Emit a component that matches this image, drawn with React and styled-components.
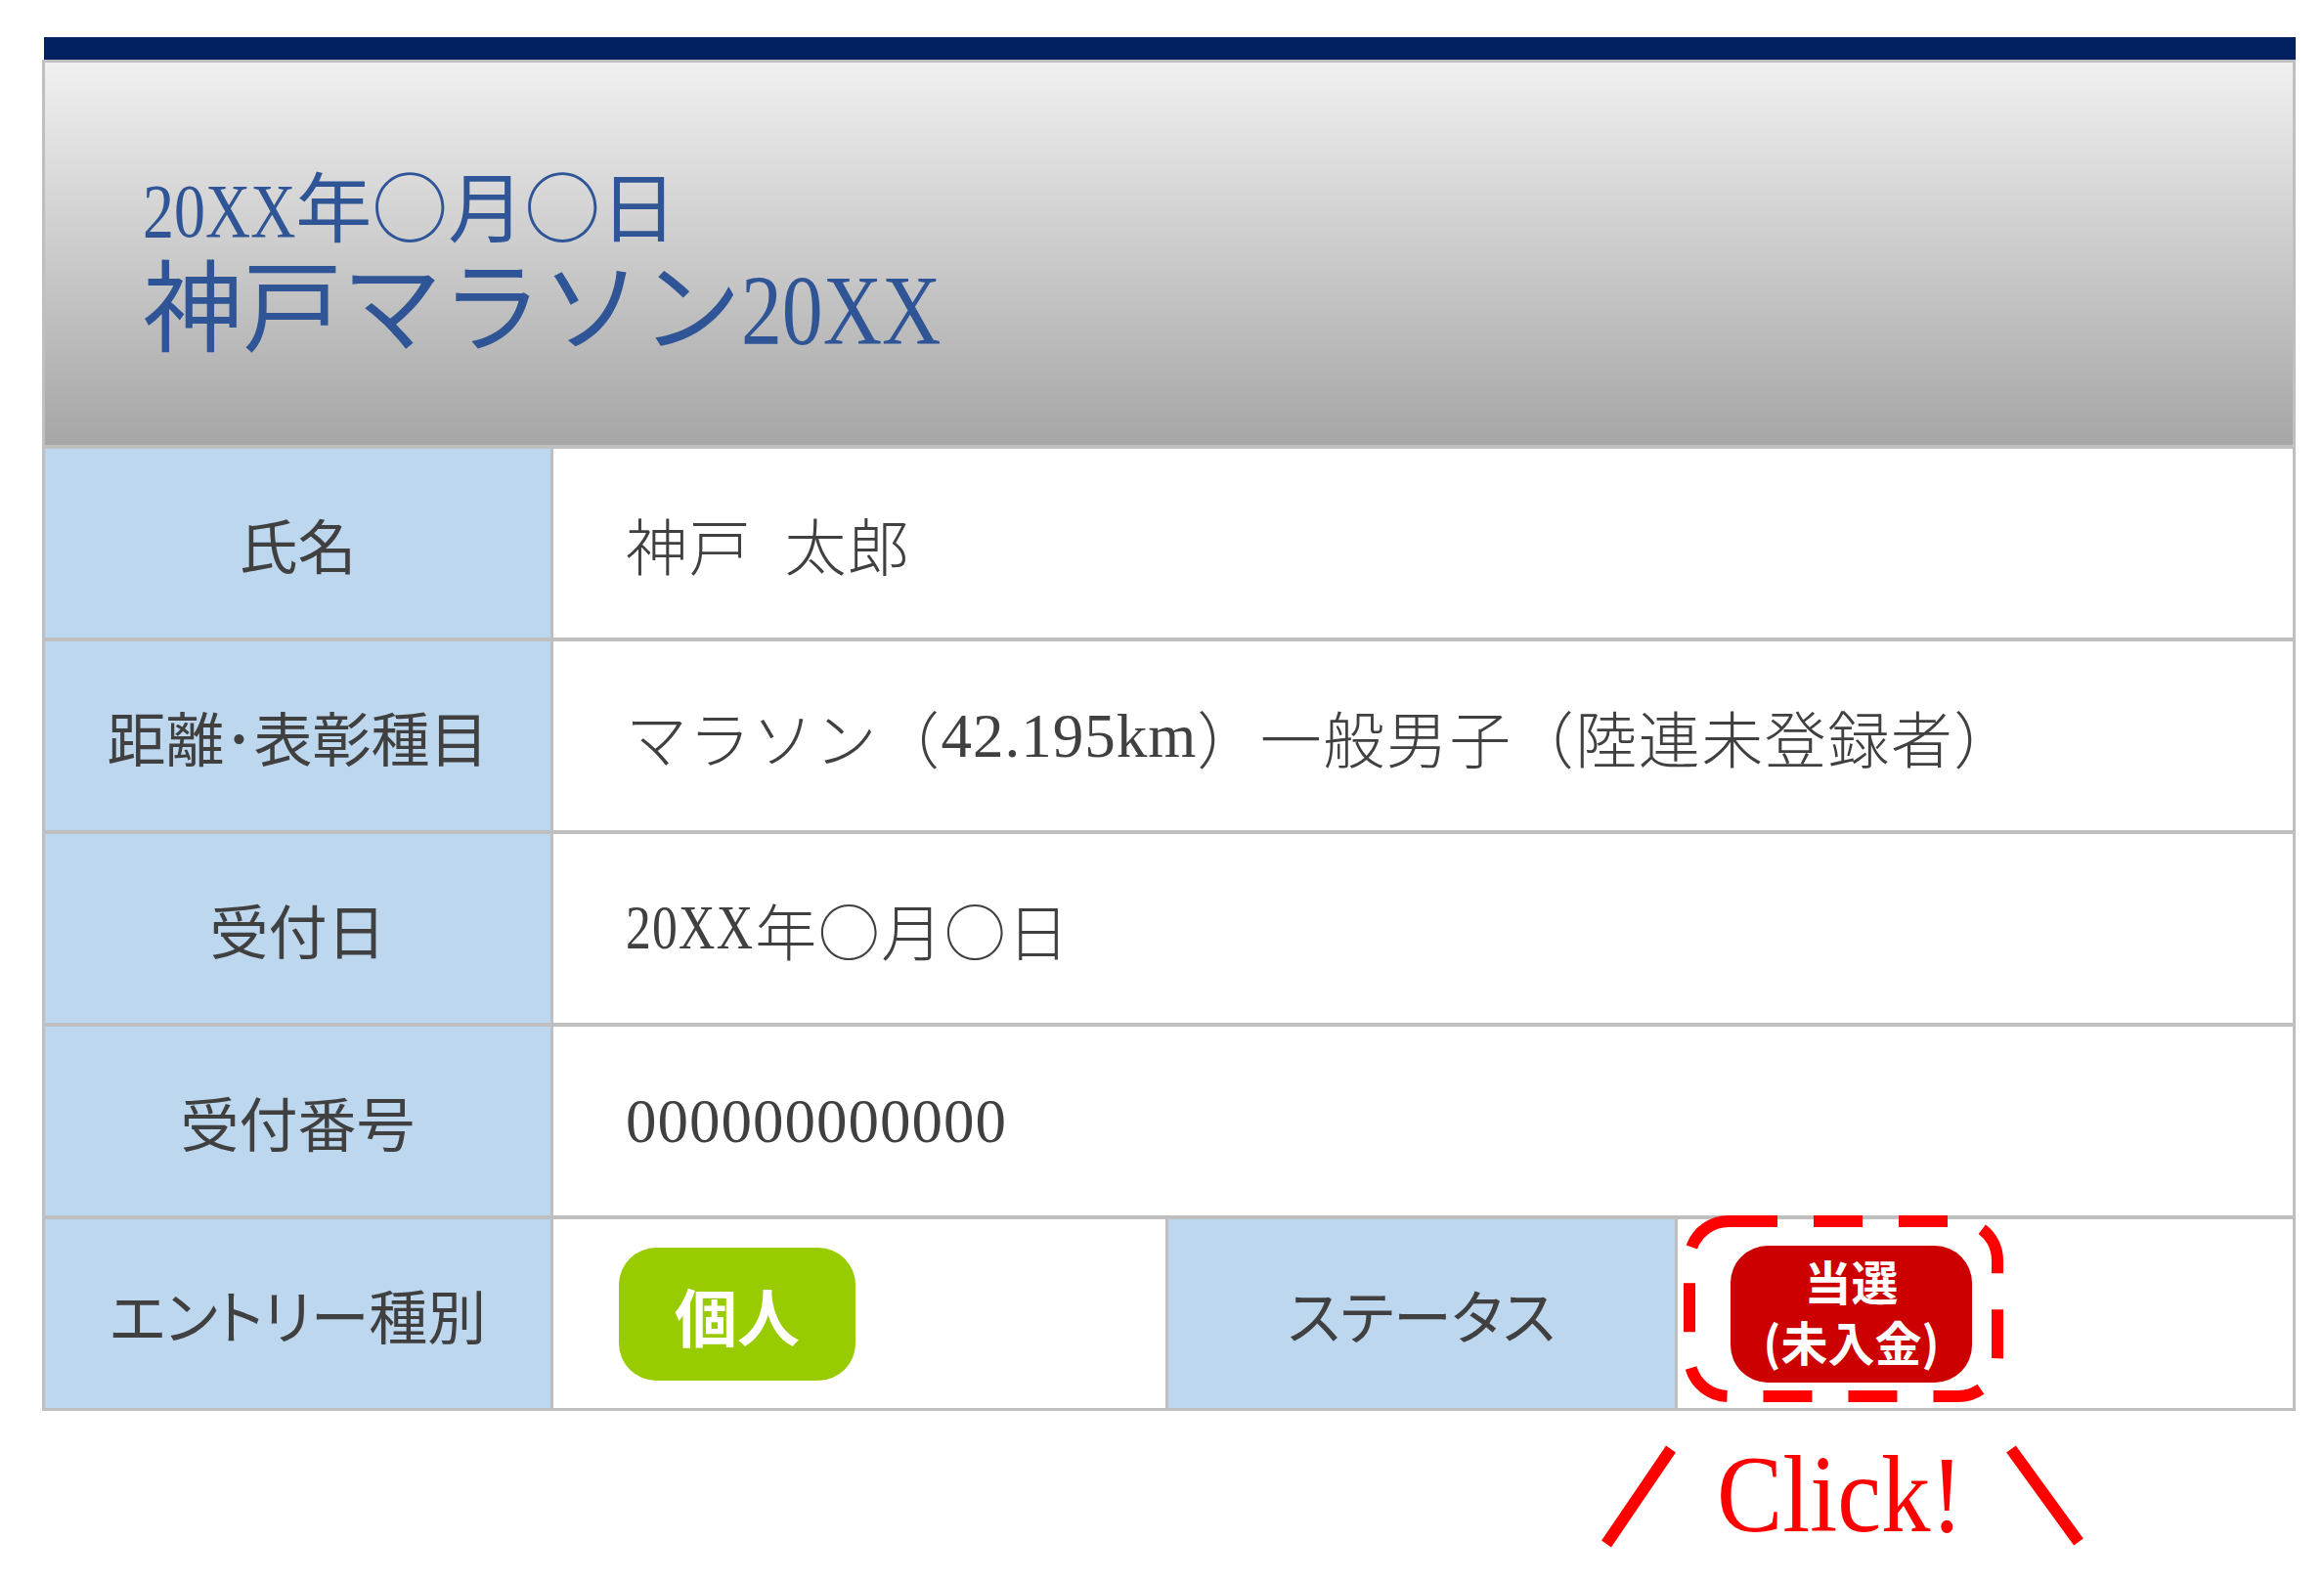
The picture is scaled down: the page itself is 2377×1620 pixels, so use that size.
import React from 'react';
import styled, { createGlobalStyle } from 'styled-components';

/* ── page ── */
const GlobalStyle = createGlobalStyle`
  html, body { margin: 0; padding: 0; background: #fff; }
  body { font-family: "Noto Sans CJK JP", "Noto Sans", sans-serif; }
`;

const Page = styled.div`
  width: 2305px;
  padding: 38px 0 40px 43px;
`;

const NavyBar = styled.div`
  height: 23px;
  margin-left: 2px;
  background: #002060;
`;

/* grey background shows through the gaps as the table rules */
const Sheet = styled.div`
  display: flex;
  flex-direction: column;
  gap: 4px;
  padding: 3px;
  background: #bfbfbf;
`;

/* ── header ── */
const Header = styled.header`
  box-sizing: border-box;
  height: 391px;
  padding: 0 0 0 100px;
  display: flex;
  flex-direction: column;
  justify-content: center;
  background: linear-gradient(180deg, #f0f0f0 0%, #a6a6a6 100%);
  color: #2f5597;
`;

const EventDate = styled.div`
  font-size: 78px;
  line-height: 96px;
`;

const EventName = styled.div`
  font-size: 102px;
  line-height: 103px;
`;

/* half-width latin runs */
const Num = styled.span`
  font-family: "Liberation Serif", serif;
  letter-spacing: 1px;
  line-height: 0;
`;

/* "20XX" squeezed to half-width cells like the original mincho face */
const Year = styled.span`
  display: inline-block;
  font-family: "Liberation Serif", serif;
  line-height: 0.8;
  transform: scaleX(0.82);
  transform-origin: 0 0;
  margin-right: -0.44em;
`;

/* ── rows ── */
const Row = styled.div`
  display: grid;
  grid-template-columns: ${({ $cols }) => $cols};
  column-gap: 3px;
  height: 193px;
`;

const Label = styled.div`
  display: flex;
  align-items: center;
  justify-content: center;
  background: #bdd7ee;
  color: #404040;
  font-size: 60px;
  font-feature-settings: "palt";
`;

const Value = styled.div`
  position: relative;
  display: flex;
  align-items: center;
  padding-left: ${({ $pad }) => $pad ?? 74}px;
  background: #fff;
  color: #404040;
  font-size: 63px;
  font-weight: 300;
  letter-spacing: 1.5px;
  word-spacing: 18px;
  white-space: nowrap;
`;

const Badge = styled.div`
  flex: none;
  box-sizing: border-box;
  display: flex;
  flex-direction: column;
  align-items: center;
  justify-content: center;
  width: ${({ $w }) => $w}px;
  height: ${({ $h }) => $h}px;
  padding-bottom: ${({ $lift }) => $lift ?? 0}px;
  border-radius: 38px;
  background: ${({ $bg }) => $bg};
  color: #fff;
  font-weight: 700;
  font-size: ${({ $size }) => $size}px;
  line-height: ${({ $lh }) => $lh}px;
  letter-spacing: 0;
  word-spacing: 0;
`;

/* ── click annotation ── */
const ClickFrame = styled.svg`
  position: absolute;
  left: 6px;
  top: -4px;
  width: 327px;
  height: 191px;
  overflow: visible;
  pointer-events: none;
`;

const Hint = styled.div`
  display: flex;
  align-items: flex-start;
  margin: 32px 0 0 1587px;
`;

const Slash = styled.svg`
  flex: none;
`;

const ClickText = styled.div`
  width: 250px;
  margin: 0 34px;
  font-family: "Liberation Serif", serif;
  font-size: 112px;
  line-height: 106px;
  color: #ff0000;
  white-space: nowrap;
`;

const ClickWord = styled.span`
  display: inline-block;
  transform: scaleX(0.9);
  transform-origin: left center;
`;

const rows = [
  { label: '氏名', value: <>神戸 太郎</> },
  { label: '距離･表彰種目', value: <>マラソン（<Num>42.195km</Num>）一般男子（陸連未登録者）</> },
  { label: '受付日', value: <><Year>20XX</Year>年○月○日</> },
  { label: '受付番号', value: <Num>000000000000</Num> },
];

export default function App() {
  return (
    <Page>
      <GlobalStyle />
      <NavyBar />
      <Sheet>
        <Header>
          <EventDate><Year>20XX</Year>年○月○日</EventDate>
          <EventName>神戸マラソン<Year>20XX</Year></EventName>
        </Header>

        {rows.map((r) => (
          <Row key={r.label} $cols="517px 1fr">
            <Label>{r.label}</Label>
            <Value>{r.value}</Value>
          </Row>
        ))}

        <Row $cols="517px 626px 518px 1fr">
          <Label>エントリー種別</Label>
          <Value $pad={67}>
            <Badge $w={242} $h={136} $bg="#99cc00" $size={64} $lh={80}>個人</Badge>
          </Value>
          <Label>ステータス</Label>
          <Value $pad={54}>
            <Badge $w={247} $h={140} $bg="#cc0000" $size={48} $lh={62} $lift={8}>
              <span>当選</span>
              <span>(未入金)</span>
            </Badge>
            <ClickFrame viewBox="0 0 327 191">
              <rect x="6" y="6" width="315" height="179" rx="40" ry="40"
                fill="none" stroke="#ff0000" strokeWidth="12" strokeDasharray="50 37" />
            </ClickFrame>
          </Value>
        </Row>
      </Sheet>

      <Hint>
        <Slash width="92" height="112" viewBox="0 0 92 112">
          <line x1="13" y1="104" x2="79" y2="7" stroke="#ff0000" strokeWidth="12" />
        </Slash>
        <ClickText><ClickWord>Click!</ClickWord></ClickText>
        <Slash width="100" height="112" viewBox="0 0 100 112">
          <line x1="17" y1="7" x2="86" y2="102" stroke="#ff0000" strokeWidth="12" />
        </Slash>
      </Hint>
    </Page>
  );
}
